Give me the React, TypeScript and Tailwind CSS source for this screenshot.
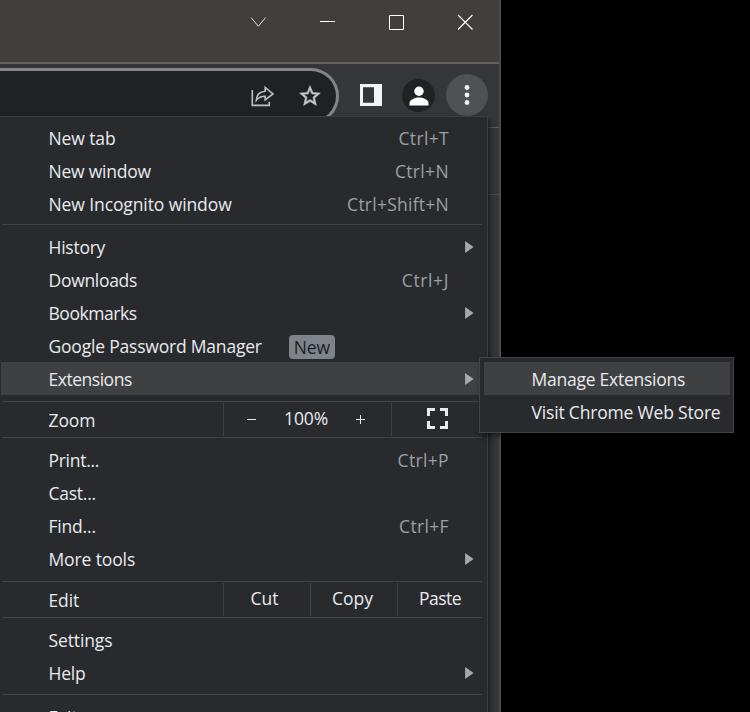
import type { ReactNode } from "react";

const Arrow = () => (
  <svg className="ml-auto mr-[10px] mt-[10.7px] h-3 w-[9px] shrink-0" viewBox="0 0 9 12">
    <path d="M0.1 0L8.6 6L0.1 12Z" fill="#a8a9ab" />
  </svg>
);

type RowProps = {
  label: string;
  spacing: string;
  keys?: string;
  keySpacing?: string;
  submenu?: boolean;
  active?: boolean;
  badge?: string;
};

const Row = ({ label, spacing, keys, keySpacing = "tracking-[0.35px]", submenu, active, badge }: RowProps) => (
  <div className={`ml-px flex h-[33px] shrink-0 items-start pl-[47.5px] pr-[3px] ${active ? "bg-[#3f4042]" : ""}`}>
    <span className={`pt-[5px] ${spacing}`}>{label}</span>
    {badge && (
      <span className="ml-[27px] mt-[6px] flex h-6 w-[46px] items-center justify-center rounded bg-[#7f848a] tracking-[-0.2px] text-[#202124]">
        {badge}
      </span>
    )}
    {keys && <span className={`ml-auto mr-[35px] pt-[5px] text-[#9aa0a6] ${keySpacing}`}>{keys}</span>}
    {submenu && <Arrow />}
  </div>
);

const Line = ({ className = "" }: { className?: string }) => (
  <div className={`ml-[2px] mr-[5px] h-px shrink-0 bg-[#404144] ${className}`} />
);

const Cell = ({ children, className }: { children: ReactNode; className: string }) => (
  <div className={`flex border-l border-[#404144] pt-[3px] ${className}`}>{children}</div>
);

export default function App() {
  return (
    <div className="relative h-[712px] w-[750px] overflow-hidden bg-black font-['Open_Sans','Noto_Sans',sans-serif] text-[17.5px] leading-[24px] whitespace-nowrap text-[#e8eaed]">
      <div className="flex h-full w-[501px] flex-col border-r-2 border-[#4c4b4b] bg-[#35363a]">
        <header className="flex h-[62px] shrink-0 items-start justify-end bg-[#413f3c] pr-[26px] pt-[14px]">
          <div className="flex gap-[53px]">
            <svg width="16" height="16" viewBox="0 0 16 16" fill="none" stroke="#e4e4e3" strokeWidth="1"><path d="M1 3.5L8.3 12.3L15.6 3.5" /></svg>
            <svg width="16" height="16" viewBox="0 0 16 16" stroke="#fff"><path d="M1 7.5H16" /></svg>
            <svg width="16" height="17" viewBox="0 0 16 17" fill="none" stroke="#fff"><path d="M1.5 1.5H15.5V15.5H1.5Z" /></svg>
            <svg width="16" height="16" viewBox="0 0 16 16" stroke="#fff" strokeWidth="1.1"><path d="M1 1L15.5 15.5M15.5 1L1 15.5" /></svg>
          </div>
        </header>
        <div className="h-[2px] shrink-0 bg-[#636260]" />
        <div className="flex h-[64px] shrink-0 items-start pt-1">
          <div className="flex h-[56px] w-[338.5px] shrink-0 items-start justify-end rounded-r-full border-y-[3px] border-r-[3px] border-[#80868b] bg-[#202124] pr-[13.5px] pt-[13px]">
            <svg className="mr-[24px]" width="24" height="24" viewBox="0 0 24 24" fill="none" stroke="#bdc1c6" strokeWidth="1.6">
              <path d="M2.3 6V21.4H19.3V17.8" />
              <path d="M6.3 16.3C6.5 11.2 9.5 7.8 15.2 7.3V3.4L23 10L15.2 15.8V12.3C11 12.2 8.5 13.5 6.3 16.3Z" />
            </svg>
            <svg width="24" height="24" viewBox="0 0 24 24" fill="#c5c8cb" stroke="#c5c8cb" strokeWidth="0.5">
              <path d="M22.4 9.1l-7.5-.65L12 1.6 9.1 8.46l-7.5.64 5.7 4.94-1.72 7.36L12 17.5l6.42 3.9-1.7-7.36 5.68-4.94zM12 15.4l-3.9 2.36 1.03-4.45-3.43-3 4.54-.4L12 5.8l1.77 4.12 4.54.4-3.44 2.98 1.04 4.45L12 15.4z" />
            </svg>
          </div>
          <svg className="ml-[21.5px] mt-4 shrink-0" width="22" height="22" viewBox="0 0 22 22">
            <path fill="#f1f3f4" fillRule="evenodd" d="M0 0H22V22H0ZM3 3.3H14V18.7H3Z" />
          </svg>
          <div className="ml-5 mt-[11px] flex h-[33px] w-[33px] shrink-0 items-center justify-center rounded-full bg-[#202124]">
            <svg width="20" height="20" viewBox="0 0 20 20" fill="#fff">
              <circle cx="10" cy="5.2" r="4.7" />
              <path d="M.5 19.5V17C.5 13.5 6.5 11.5 10 11.5S19.5 13.5 19.5 17V19.5Z" />
            </svg>
          </div>
          <div className="ml-[11px] mt-[6px] flex h-[42px] w-[42px] shrink-0 items-center justify-center rounded-full bg-[#505154]">
            <svg width="6" height="22" viewBox="0 0 6 22" fill="#f1f3f4">
              <circle cx="3" cy="3.5" r="2.4" /><circle cx="3" cy="11" r="2.4" /><circle cx="3" cy="18.5" r="2.4" />
            </svg>
          </div>
        </div>
        <div className="mt-[-1px] h-px shrink-0 bg-[#5b5c5f]" />
        <div className="h-[66px] shrink-0" />
        <div className="h-px shrink-0 bg-[#4a4b4e]" />
      </div>

      <nav className="absolute left-0 top-[116px] flex h-[620px] w-[488px] flex-col border-r border-t border-[#3b3c3f] bg-[#292a2d] pt-1 shadow-[2px_3px_5px_rgba(0,0,0,0.55)]">
        <Row label="New tab" spacing="tracking-[-0.1px]" keys="Ctrl+T" />
        <Row label="New window" spacing="tracking-[-0.22px]" keys="Ctrl+N" />
        <Row label="New Incognito window" spacing="tracking-[-0.1px]" keys="Ctrl+Shift+N" keySpacing="tracking-[0.25px]" />
        <Line className="mb-[5px] mt-1" />
        <Row label="History" spacing="tracking-[-0.25px]" submenu />
        <Row label="Downloads" spacing="tracking-[-0.3px]" keys="Ctrl+J" keySpacing="tracking-[0.6px]" />
        <Row label="Bookmarks" spacing="tracking-[-0.45px]" submenu />
        <Row label="Google Password Manager" spacing="tracking-[-0.2px]" badge="New" />
        <Row label="Extensions" spacing="tracking-[-0.48px]" submenu active />
        <Line className="mt-[6px]" />
        <div className="my-px flex h-[33px] shrink-0 pl-[48.5px]">
          <span className="w-[174.5px] pt-[5px] tracking-[-0.1px]">Zoom</span>
          <Cell className="w-[168px]">
            <svg className="ml-[23px] mt-[9px]" width="10" height="10" viewBox="0 0 10 10" stroke="#e8eaed"><path d="M0 4.5H9" /></svg>
            <span className="ml-[27px] w-[45px] tracking-[-0.1px]">100%</span>
            <svg className="ml-[27px] mt-[9px]" width="10" height="10" viewBox="0 0 10 10" stroke="#e8eaed"><path d="M0 4.5H9M4.5 0V9" /></svg>
          </Cell>
          <Cell className="">
            <svg className="ml-[35px] mt-[2px]" width="21" height="21" viewBox="0 0 21 21" fill="none" stroke="#e8eaed" strokeWidth="3">
              <path d="M1.5 8V1.5H8M13 1.5H19.5V8M19.5 13V19.5H13M8 19.5H1.5V13" />
            </svg>
          </Cell>
        </div>
        <Line className="mb-[5px]" />
        <Row label="Print..." spacing="tracking-[-0.28px]" keys="Ctrl+P" />
        <Row label="Cast..." spacing="tracking-[-0.25px]" />
        <Row label="Find..." spacing="tracking-[-0.2px]" keys="Ctrl+F" />
        <Row label="More tools" spacing="tracking-[-0.12px]" submenu />
        <Line className="mt-[6px]" />
        <div className="my-px flex h-[33px] shrink-0 pl-[48.5px]">
          <span className="w-[174.5px] pt-[5px] tracking-[-0.1px]">Edit</span>
          <Cell className="w-[87px] pl-[26.5px]">Cut</Cell>
          <Cell className="w-[87px] pl-[21px]">Copy</Cell>
          <Cell className="w-[87px] pl-[21px] tracking-[-0.5px]">Paste</Cell>
        </div>
        <Line className="mb-[5px]" />
        <Row label="Settings" spacing="tracking-[-0.12px]" />
        <Row label="Help" spacing="tracking-[-0.25px]" submenu />
        <Line className="my-[5px]" />
        <Row label="Exit" spacing="tracking-[-0.2px]" />
      </nav>

      <div className="absolute left-[479px] top-[357px] flex h-[76px] w-[255px] flex-col border border-[#434447] bg-[#292a2d] pl-1 pr-[3px] pt-1 shadow-[2px_3px_5px_rgba(0,0,0,0.5)]">
        <div className="h-[33px] bg-[#3f4042] pl-[47.5px] pt-[5px] tracking-[-0.25px]">Manage Extensions</div>
        <div className="h-[33px] pl-[47.5px] pt-[5px] tracking-[-0.18px]">Visit Chrome Web Store</div>
      </div>
    </div>
  );
}
